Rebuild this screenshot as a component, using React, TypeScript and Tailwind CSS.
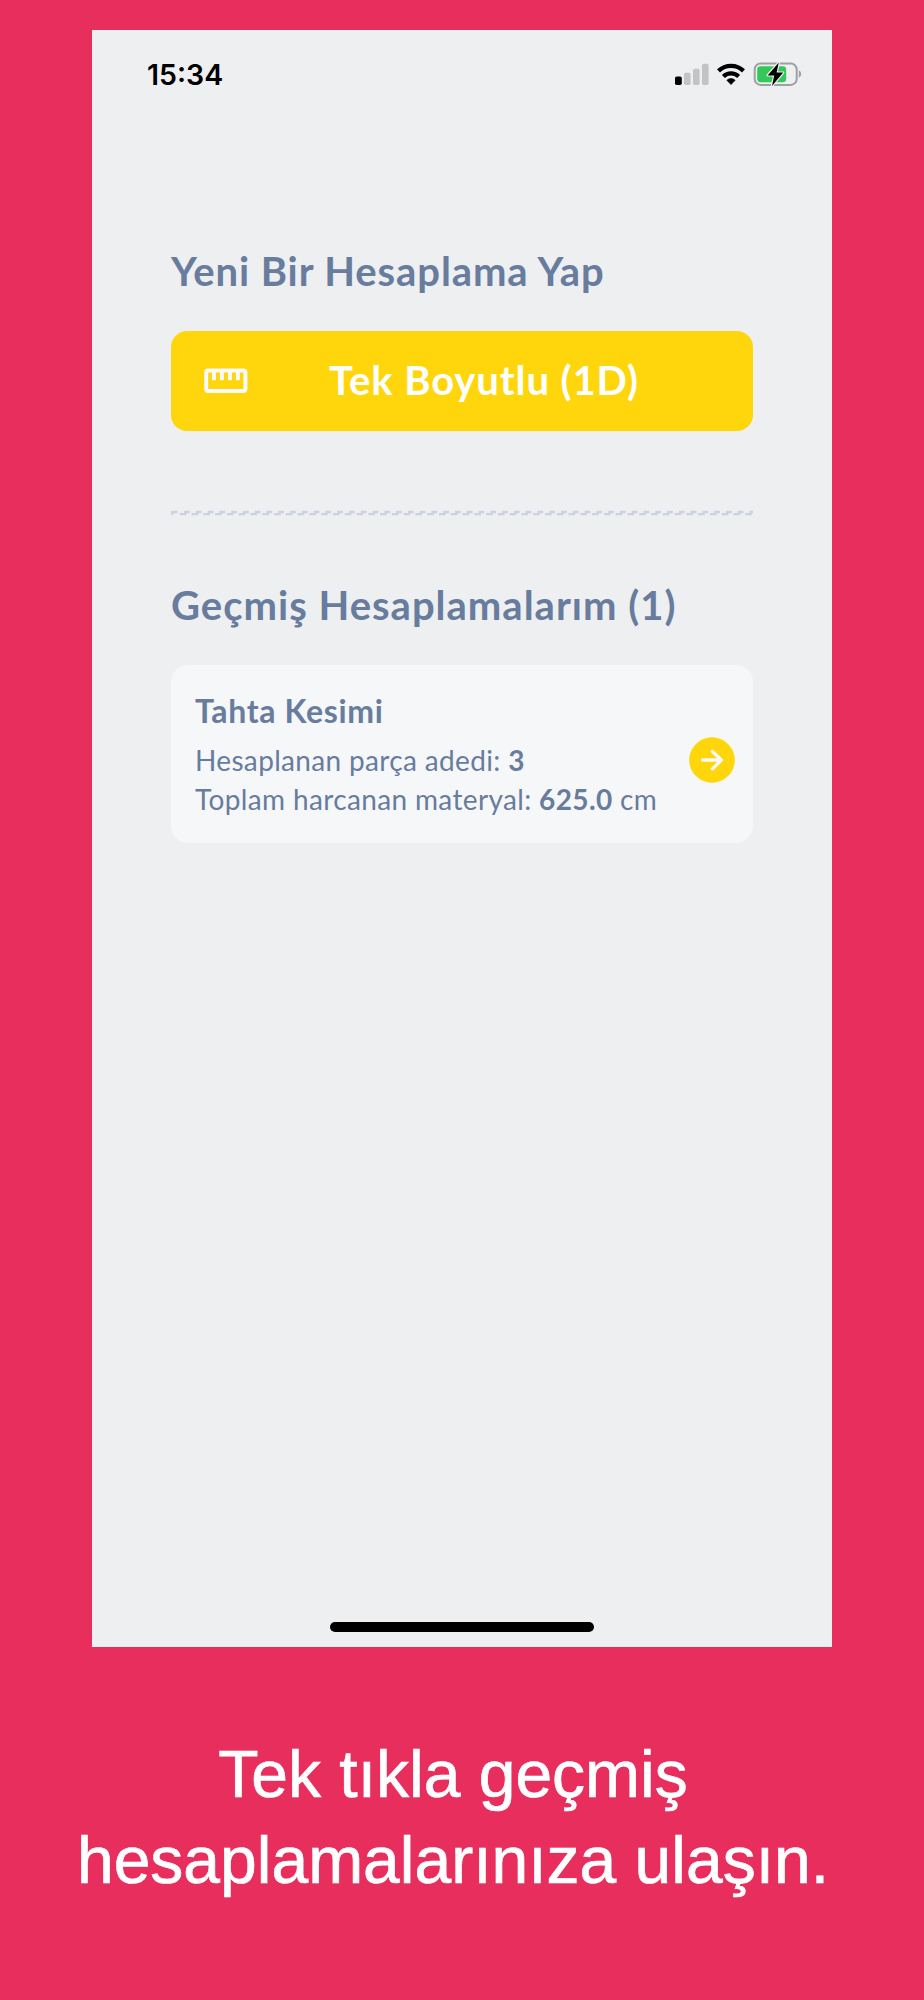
const dashes = Array.from({ length: 49 }, (_, i) => 8.8 + i * 11.78);

function StatusIcons() {
  return (
    <svg width="130" height="30" viewBox="674 59 130 30">
      <rect x="675" y="76.5" width="6.8" height="8.5" rx="1.8" fill="#000" />
      <g fill="#c2c3c5">
        <rect x="684" y="72.8" width="6.6" height="12.2" rx="1.8" />
        <rect x="693" y="68.7" width="6.6" height="16.3" rx="1.8" />
        <rect x="702" y="63.8" width="6.6" height="21.2" rx="1.8" />
      </g>
      <g fill="none" stroke="#000" strokeWidth="4.3">
        <path d="M718.5 70.9a18.2 18.2 0 0 1 25 0" />
        <path d="M723.4 76.5a11 11 0 0 1 15.2 0" />
      </g>
      <path d="M731 84.6l-4.2-4.4a6 6 0 0 1 8.4 0z" fill="#000" stroke="#000" strokeWidth="0.6" />
      <rect x="754.7" y="63.5" width="42" height="21.4" rx="6" fill="none" stroke="#9fa0a2" strokeWidth="2" />
      <path d="M798.8 70.6c3.2 1.2 3.2 5.8 0 7z" fill="#9fa0a2" />
      <rect x="757.2" y="66.2" width="29" height="16" rx="3.4" fill="#34c759" />
      <path d="M778.8 62.6 767.6 75.4h6.6l-2.2 10.6 11.2-13.4h-6.6z" fill="#000" stroke="#eeeff1" strokeWidth="2.4" paintOrder="stroke" strokeLinejoin="round" />
    </svg>
  );
}

function RulerIcon() {
  return (
    <svg width="44" height="26" viewBox="0 0 44 26" fill="none" stroke="#fafafa" strokeWidth="4">
      <rect x="2.2" y="2.5" width="39.2" height="20.5" rx="2" />
      <path d="M9.9 3v9.3M17.9 3v9.3M25.9 3v9.3M33.9 3v9.3" />
    </svg>
  );
}

function Divider() {
  return (
    <svg className="mt-[79px] block" width="582" height="6" viewBox="0 0 582 6" fill="none" stroke="#cbd1e0" strokeWidth="2.3">
      <path d="M1.2 5V2H6.5" />
      {dashes.map((x) => (
        <path key={x} d={`M${x} 4.2H${x + 5.5}V2H${x + 10}`} />
      ))}
    </svg>
  );
}

function HistoryCard() {
  return (
    <div className="mt-[36px] h-[178px] rounded-[17px] bg-[#f6f7f9] pl-[24px] pr-[18px] flex items-center justify-between">
      <div className="mt-[2px] whitespace-nowrap">
        <div className="font-bold text-[32px] leading-[38px] tracking-[0.65px]">Tahta Kesimi</div>
        <div className="mt-[11px] text-[28px] leading-[39px]">
          <div className="tracking-[0.34px]">Hesaplanan parça adedi: <b>3</b></div>
          <div className="tracking-[0.36px]">Toplam harcanan materyal: <b>625.0</b> cm</div>
        </div>
      </div>
      <svg className="mt-[12px]" width="46" height="46" viewBox="0 0 46 46" fill="none">
        <circle cx="23" cy="23" r="22.8" fill="#ffd60c" />
        <path d="M13.5 23H32M23.5 14.5 32.3 23l-8.8 8.8" stroke="#fafafa" strokeWidth="3.3" strokeLinecap="round" strokeLinejoin="round" />
      </svg>
    </div>
  );
}

export default function App() {
  return (
    <div className="w-[924px] h-[2000px] bg-[#e82e5c] pt-[30px] overflow-hidden">
      <div className="mx-auto w-[740px] h-[1617px] bg-[#eeeff1] flex flex-col font-['Lato',sans-serif] text-[#687c9e]">
        <header className="h-[217px] pt-[29px] pl-[55px] pr-[28px] flex items-start justify-between">
          <span className="font-['Inter',sans-serif] font-semibold text-[28.5px] leading-[32px] text-black">15:34</span>
          <StatusIcons />
        </header>

        <main className="flex-1 px-[79px]">
          <h1 className="font-bold text-[40px] leading-[48px] tracking-[0.9px]">Yeni Bir Hesaplama Yap</h1>
          <button className="mt-[36px] w-full h-[100px] rounded-2xl bg-[#ffd60c] text-white flex items-center pl-[33px]">
            <RulerIcon />
            <span className="ml-[81px] mb-[2px] font-bold text-[40px] leading-[48px] tracking-[0.9px]">Tek Boyutlu (1D)</span>
          </button>
          <Divider />
          <h2 className="mt-[65px] font-bold text-[40px] leading-[48px] tracking-[1px]">Geçmiş Hesaplamalarım (1)</h2>
          <HistoryCard />
        </main>

        <div className="mx-auto mb-[15px] w-[264px] h-[10px] rounded-full bg-black" />
      </div>

      <p className="mt-[84px] -ml-[18px] text-center font-['Liberation_Sans',sans-serif] text-[66px] leading-[86px] text-white [-webkit-text-stroke:0.7px_white]">
        Tek tıkla geçmiş
        <br />
        hesaplamalarınıza ulaşın.
      </p>
    </div>
  );
}
